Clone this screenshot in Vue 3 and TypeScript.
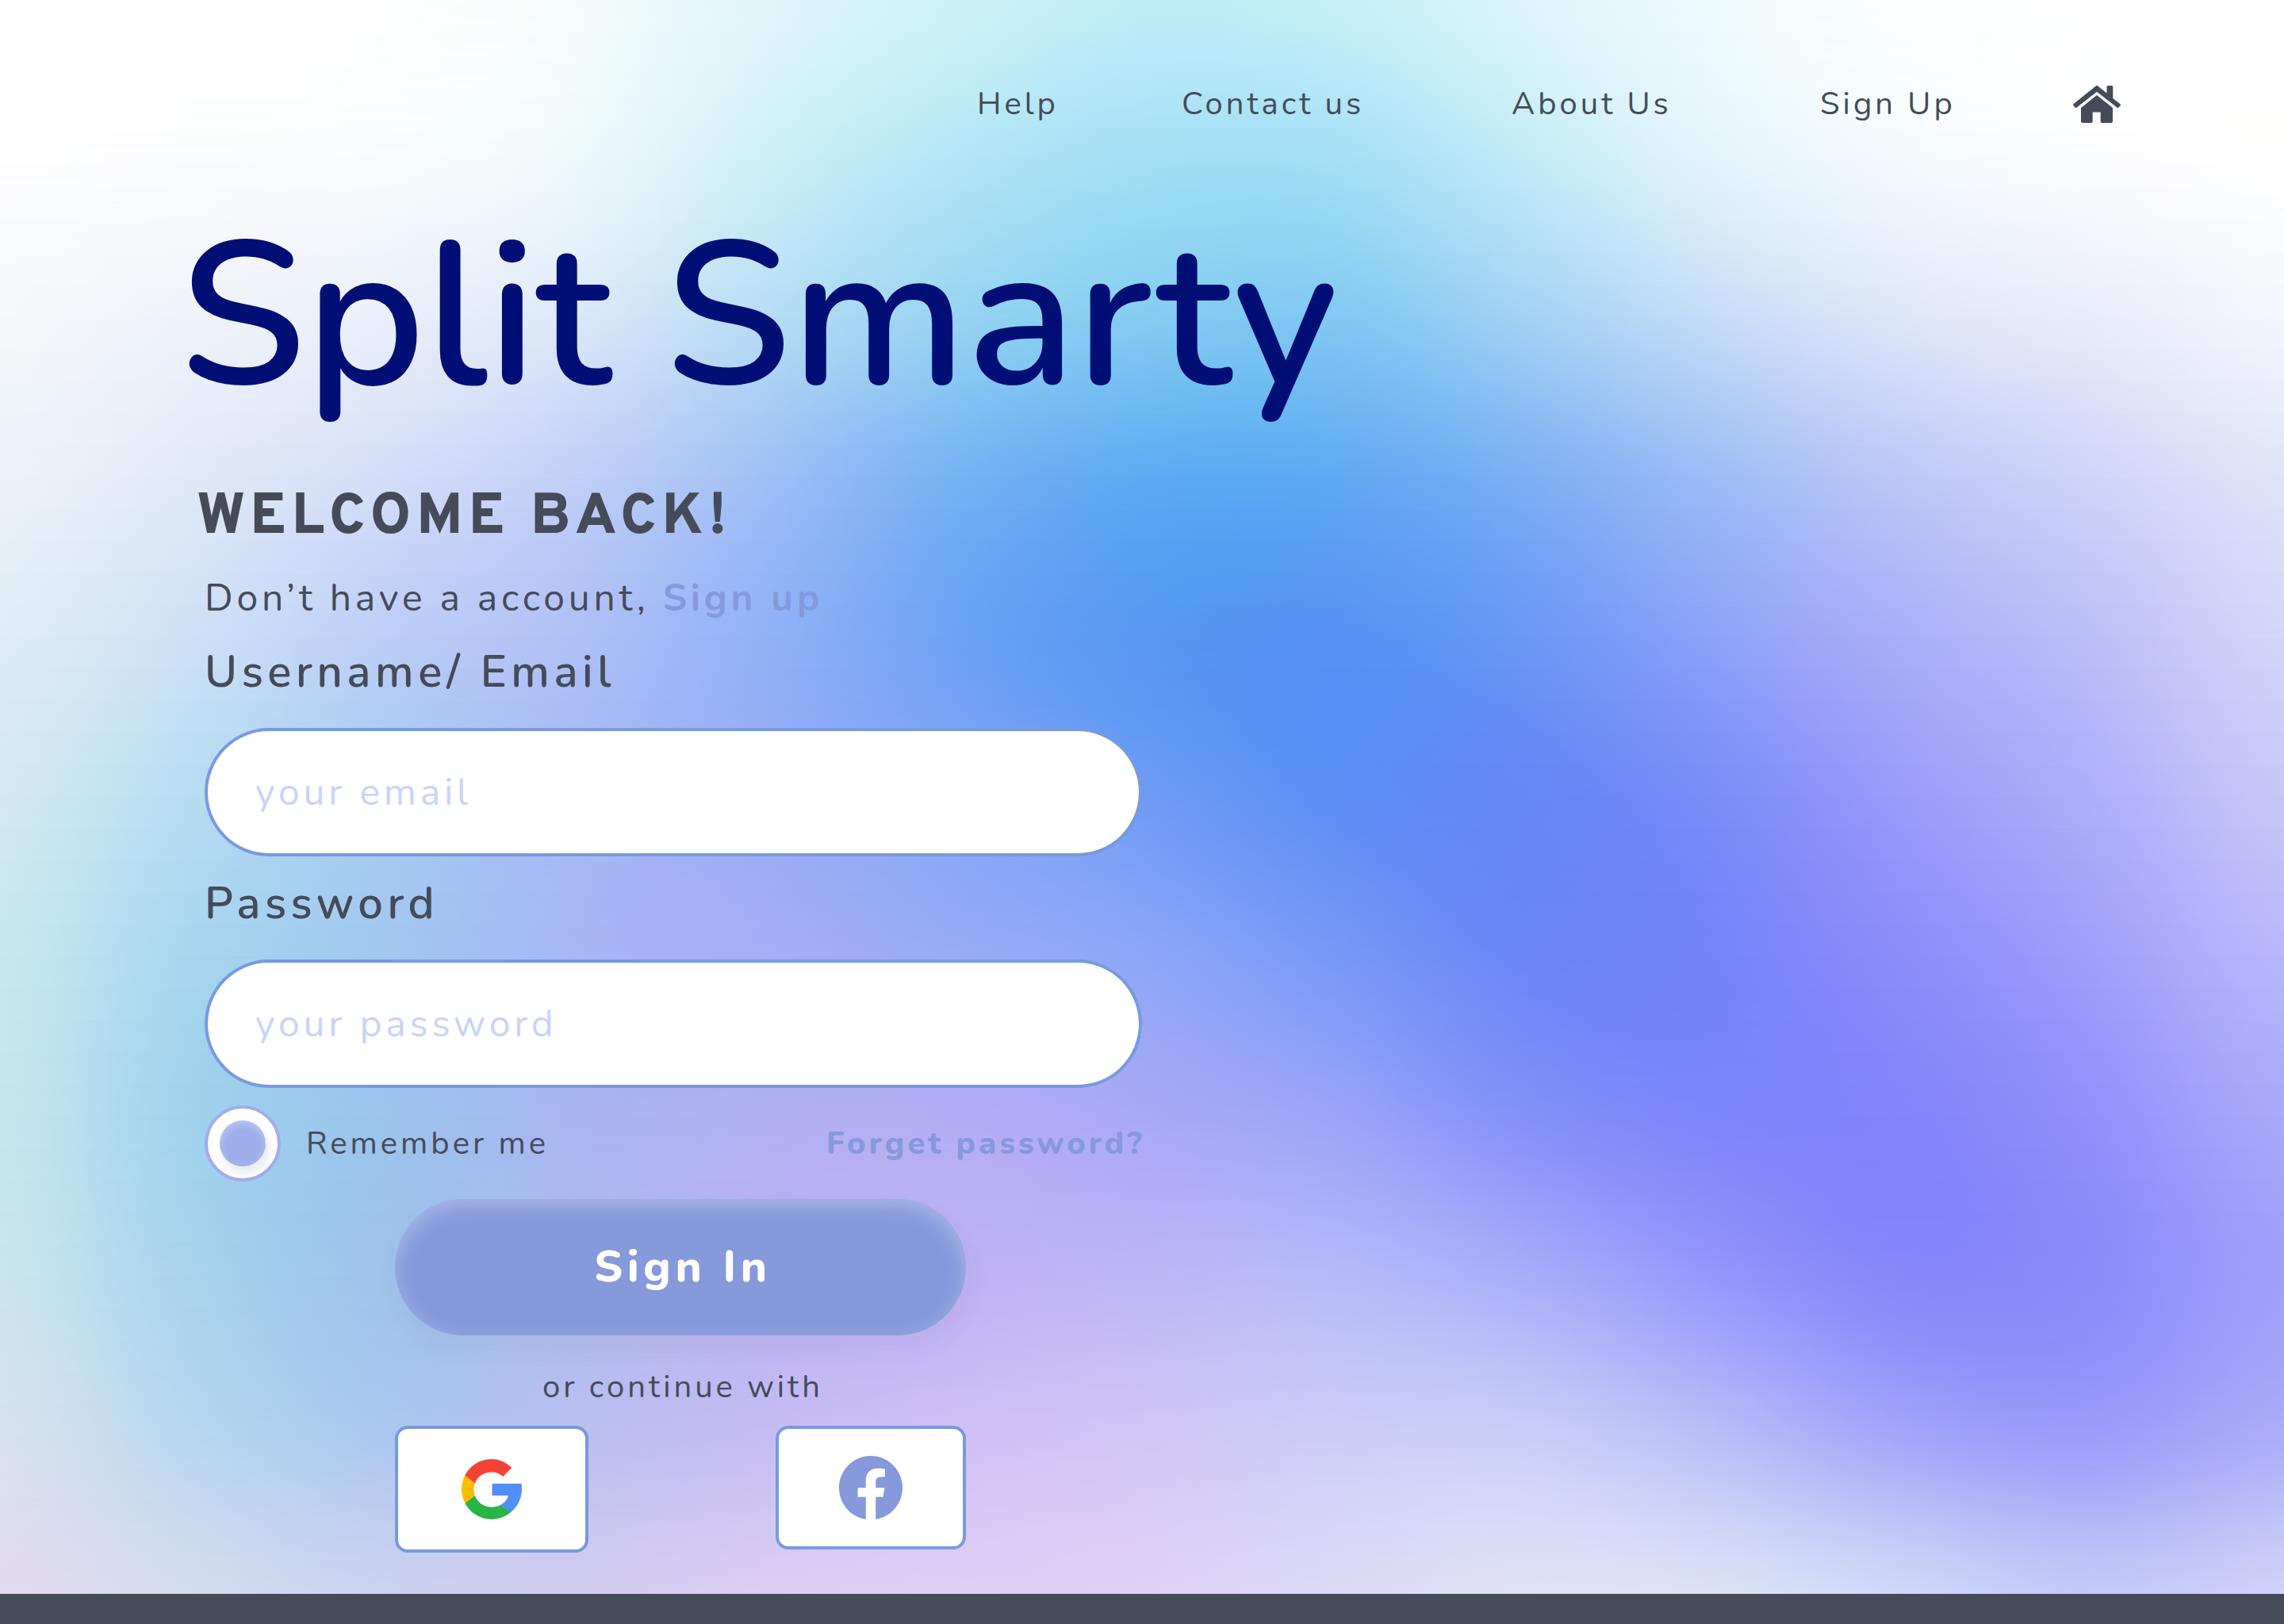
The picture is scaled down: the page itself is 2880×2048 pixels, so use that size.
<script setup lang="ts">
import { ref } from 'vue'

interface NavLink {
  label: string
  href: string
}

const links: NavLink[] = [
  { label: 'Help', href: '#help' },
  { label: 'Contact us', href: '#contact' },
  { label: 'About Us', href: '#about' },
  { label: 'Sign Up', href: '#signup' },
]

// Colour mesh of the backdrop: evenly spaced rows, each with evenly spaced stops.
const mesh: string[][] = [
  ['#ffffff', '#ffffff', '#fefefe', '#f5fcfc', '#e0f6fa', '#cff1f8', '#c0edf8', '#c6eff8', '#dcf5fb', '#effbfd', '#fbfefe', '#ffffff', '#ffffff'],
  ['#fdfdfe', '#fbfcfd', '#f8fcfd', '#eef9fb', '#cfeff7', '#b4e6f5', '#a3dff4', '#a4dff5', '#c2eaf7', '#e2f4fb', '#f3fafd', '#fbfcfe', '#fefefe'],
  ['#f5f8fb', '#eff3fa', '#e9effa', '#dbe8f8', '#b8dcf5', '#98d3f3', '#84ccf2', '#82c8f3', '#a2d1f5', '#c5dcf7', '#dde6f9', '#e8ecfa', '#f4f6fc'],
  ['#ebf2f8', '#e0e9f7', '#d4def8', '#c1d0f7', '#a0c0f5', '#78b2f3', '#5fabf2', '#60aaf2', '#7caff4', '#9ebcf5', '#bcc8f7', '#cfd5f8', '#e0e3f8'],
  ['#deecf5', '#cde1f6', '#bccff6', '#afc1f6', '#93b2f6', '#6fa3f4', '#5799f3', '#5793f5', '#6a98f6', '#8ea2f8', '#a9b0f7', '#bcbff8', '#d4d5f8'],
  ['#d2e9f3', '#b8dcf1', '#a9cbf2', '#a7baf4', '#9aadf5', '#85a6f6', '#6f9cf6', '#5e8ff6', '#6587f6', '#7b8df9', '#9a9cf9', '#aeaff9', '#c6c7f9'],
  ['#c9e7f0', '#a9d6ee', '#a2c7f0', '#a6b7f4', '#a4b0f4', '#9aaaf7', '#8ea6f7', '#7999f7', '#6d87f8', '#7784fa', '#8b8efb', '#a09ffa', '#b8b7fa'],
  ['#c8e5ee', '#a1d2ec', '#9dc4ed', '#a8b6f0', '#b0b1f2', '#b3aef4', '#a9a9f6', '#9aa5f8', '#8591f9', '#7d86fb', '#8186fb', '#9391fb', '#aaa9fa'],
  ['#cbe5ef', '#aad3ec', '#a0c3ec', '#aebcf0', '#bbb2f3', '#bfb2f6', '#bdb6f6', '#b5baf8', '#a8aef9', '#9598fb', '#8688fb', '#8b8dfb', '#a0a0fa'],
  ['#d8e2f0', '#b9d7ee', '#adc8ef', '#b9c0f0', '#c6bdf3', '#cfc0f6', '#d1c6f6', '#cccdf7', '#c9cef8', '#b9bef8', '#a3a6f9', '#9c9df9', '#adadf9'],
  ['#e4daf2', '#d3dcf0', '#ccd3ef', '#d2cdf0', '#dccdf3', '#dfcef5', '#dfd1f5', '#dcdaf6', '#dfe1f7', '#dbe2f6', '#cfd8f7', '#c4caf8', '#cfd2f7'],
]

const SUBDIVISIONS = 5

type Rgb = number[]

const parse = (hex: string): Rgb => [1, 3, 5].map((at) => parseInt(hex.slice(at, at + 2), 16))

// Catmull-Rom interpolation through a list of colour vectors.
function refine(points: Rgb[]): Rgb[] {
  const at = (i: number): Rgb => points[Math.max(0, Math.min(points.length - 1, i))]
  const out: Rgb[] = []
  for (let i = 0; i < points.length - 1; i++) {
    for (let s = 0; s < SUBDIVISIONS; s++) {
      const t = s / SUBDIVISIONS
      out.push(
        at(i).map((p1, c) => {
          const p0 = at(i - 1)[c]
          const p2 = at(i + 1)[c]
          const p3 = at(i + 2)[c]
          return (
            p1 +
            0.5 * t * (p2 - p0 + t * (2 * p0 - 5 * p1 + 4 * p2 - p3 + t * (3 * (p1 - p2) + p3 - p0)))
          )
        }),
      )
    }
  }
  out.push(at(points.length - 1))
  return out
}

function smooth(grid: string[][]): string[][] {
  const wide = grid.map((row) => refine(row.map(parse)))
  const columns = wide[0].map((_, x) => refine(wide.map((row) => row[x])))
  return columns[0].map((_, y) =>
    columns.map((column) => {
      const [r, g, b] = column[y].map((v) => Math.round(Math.max(0, Math.min(255, v))))
      return `rgb(${r}, ${g}, ${b})`
    }),
  )
}

const rows = smooth(mesh)

// Each row fades in over the one above it, which blends the rows smoothly.
function rowStyle(colors: string[], index: number): Record<string, string> {
  const step = 100 / (rows.length - 1)
  const style: Record<string, string> = {
    backgroundImage: `linear-gradient(to right, ${colors.join(', ')})`,
  }
  if (index > 0) {
    style.maskImage = `linear-gradient(to bottom, transparent ${(index - 1) * step}%, #000 ${index * step}%)`
  }
  return style
}

const email = ref('')
const password = ref('')
const remember = ref(true)
</script>

<template>
  <div class="page">
    <div class="main">
      <div class="backdrop" aria-hidden="true">
        <div v-for="(row, i) in rows" :key="i" class="mesh-row" :style="rowStyle(row, i)"></div>
      </div>

      <header class="header">
        <nav class="nav" aria-label="Main">
          <a v-for="link in links" :key="link.label" :href="link.href">{{ link.label }}</a>
          <a class="home" href="#home" aria-label="Home">
            <svg viewBox="0 0 60 47" width="60" height="47" fill="currentColor">
              <path d="M28 1Q30-1 32 1L42.500 9.500V1.500Q42.500 0 44 0H49Q50.300 0 50.300 1.500V16L59.300 23Q60.500 24.200 59.500 25.300L57.500 27.500Q56.500 28.500 55.300 27.600L30 7.700 4.700 27.600Q3.500 28.500 2.500 27.500L.5 25.300Q-.5 24.200 .7 23Z" />
              <path d="M30 12 50 28V45Q50 47 48 47H36.500Q34.700 47 34.700 45V33.500H24.700V45Q24.700 47 23 47H12Q10 47 10 45V28Z" />
            </svg>
          </a>
        </nav>
      </header>

      <main class="content">
        <h1 class="brand">Split Smarty</h1>
        <h2 class="welcome">WELCOME BACK!</h2>

        <form class="form" @submit.prevent>
          <p class="prompt">Don’t have a account, <a href="#signup">Sign up</a></p>

          <label class="label" for="email">Username/ Email</label>
          <input id="email" v-model="email" class="field" type="text" placeholder="your email" />

          <label class="label" for="password">Password</label>
          <input id="password" v-model="password" class="field" type="password" placeholder="your password" />

          <div class="options">
            <label class="remember">
              <input v-model="remember" type="checkbox" />
              <span>Remember me</span>
            </label>
            <a class="forget" href="#forget">Forget password?</a>
          </div>

          <div class="actions">
            <button class="submit" type="submit">Sign In</button>
            <p class="divider">or continue with</p>
            <div class="social">
              <button class="provider google" type="button" aria-label="Google">
                <svg viewBox="2 2 44 44" width="76" height="76">
                  <path fill="#f44336" d="M24 11.500c3.200 0 6.100 1.100 8.300 3.200l6.300-6.300C34.700 4.500 29.600 2 24 2 15.400 2 8 6.900 4.300 14.100l7.400 5.700C13.400 14.900 18.300 11.500 24 11.500z" />
                  <path fill="#fbbc04" d="M10.900 24c0-1.500.3-2.900.8-4.200l-7.200-5.900C3 16.900 2 20.300 2 24s1 7.200 2.700 10.300l7-5.700c-.5-1.400-.8-3-.8-4.600z" />
                  <path fill="#28b446" d="M24 37c-5.700 0-10.600-3.500-12.300-8.400l-7.200 5.700C8.200 41.200 15.400 46 24 46c5.300 0 10.100-1.900 13.800-5l-6.800-5.700C29 36.400 26.700 37 24 37z" />
                  <path fill="#518ef8" d="M45.800 20H24.300v8.700h11.800c-.6 2.800-2.600 5.100-5.200 6.600l6.800 5.800C43 36.700 46 30.800 46 24c0-1.400-.1-2.700-.2-4z" />
                </svg>
              </button>
              <button class="provider facebook" type="button" aria-label="Facebook">
                <svg viewBox="0 0 24 24" width="80" height="80">
                  <path fill="#8699da" d="M24 12.070C24 5.400 18.600 0 12 0S0 5.400 0 12.070c0 6.030 4.400 11.020 10.130 11.930v-8.440H7.080v-3.490h3.050V9.410c0-3.020 1.790-4.690 4.530-4.690 1.310 0 2.690.24 2.690.24v2.970h-1.520c-1.490 0-1.960.93-1.960 1.890v2.250h3.330l-.53 3.490h-2.800V24C19.600 23.090 24 18.100 24 12.070z" />
                </svg>
              </button>
            </div>
          </div>
        </form>
      </main>
    </div>
    <footer class="footer"></footer>
  </div>
</template>

<style>
body {
  margin: 0;
}
</style>

<style scoped>
.page {
  display: flex;
  flex-direction: column;
  min-height: 100vh;
  color: #454b58;
  font-family: Nunito, Lato, sans-serif;
  font-size: 40px;
  line-height: 56px;
  letter-spacing: 4px;
}

.main {
  position: relative;
  z-index: 0;
  flex: 1;
}

.backdrop {
  position: absolute;
  inset: 0;
  z-index: -1;
  overflow: hidden;
}

.mesh-row {
  position: absolute;
  inset: 0;
}

a {
  color: inherit;
  text-decoration: none;
}

.header {
  display: flex;
  justify-content: flex-end;
  padding: 103px 206px 0 48px;
}

.nav {
  display: grid;
  grid-template-columns: 258px 416px 389px 319px 60px;
}

.home {
  display: flex;
  align-items: center;
}

.content {
  padding: 0 48px 52px 258px;
}

.brand {
  margin: 89px 0 0 -32px;
  color: #000e75;
  font-size: 256px;
  font-weight: 600;
  line-height: 304px;
  letter-spacing: 0;
}

.welcome {
  margin: 58px 0 0 -10px;
  font-family: Overpass, Roboto, sans-serif;
  font-size: 72px;
  font-weight: 800;
  line-height: 88px;
  letter-spacing: 0.1em;
}

.form {
  display: flex;
  flex-direction: column;
  max-width: 1182px;
}

.prompt {
  margin: 24px 0 2px;
  font-size: 48px;
  line-height: 64px;
  letter-spacing: 0.1em;
}

.prompt a {
  color: #8699da;
  font-weight: 700;
}

.label {
  margin: 24px 0 34px;
  font-size: 56px;
  font-weight: 600;
  line-height: 72px;
  letter-spacing: 0.1em;
}

.field {
  box-sizing: border-box;
  width: 100%;
  height: 162px;
  padding: 0 60px;
  border: 4px solid #789ade;
  border-radius: 81px;
  background: #fff;
  color: inherit;
  font: inherit;
  font-size: 48px;
  letter-spacing: 0.1em;
}

.field::placeholder {
  color: #c9d4fa;
  opacity: 1;
}

.options {
  display: flex;
  align-items: center;
  justify-content: space-between;
  margin: 22px -4px 0 0;
}

.remember {
  display: flex;
  align-items: center;
  gap: 32px;
}

.remember input {
  display: grid;
  place-items: center;
  box-sizing: border-box;
  width: 96px;
  height: 96px;
  margin: 0;
  border: 4px solid #a0aeea;
  border-radius: 50%;
  background: #fff;
  appearance: none;
}

.remember input:checked::before {
  content: '';
  width: 58px;
  height: 58px;
  border-radius: 50%;
  background: #9daeea;
  box-shadow: 4px 8px 12px rgba(69, 75, 88, 0.12), inset 0 4px 12px rgba(255, 255, 255, 0.3);
}

.forget {
  color: #8699da;
  font-weight: 800;
}

.actions {
  display: flex;
  flex-direction: column;
  width: 720px;
  margin: 22px 0 0 240px;
}

.submit {
  height: 172px;
  padding: 0 0 0 6px;
  border: 0;
  border-radius: 86px;
  background: #8699da;
  box-shadow: 4px 16px 32px rgba(69, 75, 88, 0.06), inset 0 8px 24px rgba(190, 205, 245, 0.6);
  color: #fff;
  font: inherit;
  font-size: 56px;
  font-weight: 800;
  letter-spacing: 0.1em;
}

.divider {
  margin: 37px 0 21px;
  padding-left: 6px;
  text-align: center;
}

.social {
  display: flex;
  align-items: flex-start;
  justify-content: space-between;
}

.provider {
  display: flex;
  align-items: center;
  justify-content: center;
  box-sizing: border-box;
  padding: 0;
  border: 4px solid #789ade;
  border-radius: 16px;
  background: #fff;
}

.google {
  width: 244px;
  height: 160px;
}

.facebook {
  width: 240px;
  height: 156px;
}

.footer {
  height: 38px;
  background: #454b58;
}
</style>
